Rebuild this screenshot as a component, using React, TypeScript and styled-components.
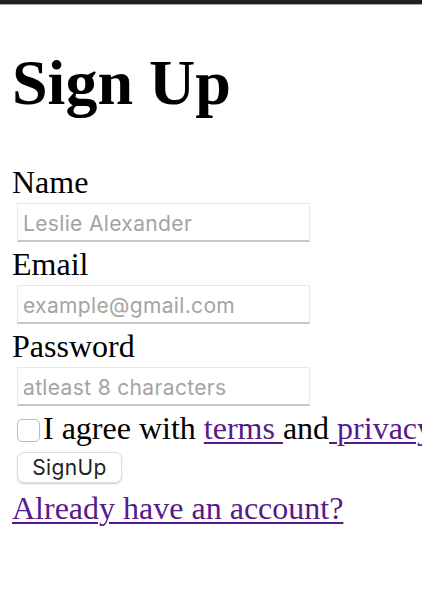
import React from "react";
import styled, { createGlobalStyle } from "styled-components";

const Global = createGlobalStyle`
  html, body {
    margin: 0;
    padding: 0;
    background: #ffffff;
    overflow: hidden;
  }
  body {
    font-family: "Liberation Serif", "Times New Roman", serif;
    color: #000;
  }
`;

const TopBar = styled.div`
  height: 4px;
  background: #202020;
  border-bottom: 1px solid #a8a8a8;
`;

const Page = styled.main`
  padding-left: 12px;
  white-space: nowrap;
`;

const Title = styled.h1`
  font-family: "Liberation Serif", "Times New Roman", serif;
  font-size: 64px;
  font-weight: 700;
  line-height: 71px;
  margin: 42px 0 46px;
`;

const Form = styled.form`
  display: flex;
  flex-direction: column;
  align-items: flex-start;
`;

const Label = styled.label`
  font-size: 32px;
  line-height: 36px;
  height: 36px;
  margin-bottom: 3px;
`;

const Input = styled.input`
  box-sizing: border-box;
  width: 293px;
  height: 39px;
  margin: 0 0 4px 5px;
  padding: 3px 5px 0;
  border: 1px solid #e8e8e8;
  border-bottom: 2px solid #c6c6c6;
  border-radius: 0;
  background: #fff;
  font-family: Inter, "Liberation Sans", sans-serif;
  font-size: 21px;
  letter-spacing: 0.35px;
  color: #222;
  outline: none;
  &::placeholder {
    color: #a4a4a4;
  }
`;

const AgreeRow = styled.div`
  display: flex;
  align-items: flex-start;
  font-size: 32px;
  line-height: 36px;
  height: 36px;
`;

const Check = styled.span`
  box-sizing: border-box;
  width: 23px;
  height: 23px;
  margin: 9px 3px 0 5px;
  border: 1px solid #b9b9b9;
  border-radius: 5px;
  background: #fff;
  flex-shrink: 0;
`;

const TextLink = styled.a`
  color: #551a8b;
  text-decoration: underline;
  text-decoration-thickness: 2px;
  text-underline-offset: 3px;
  white-space: pre;
`;

const Plain = styled.span`
  white-space: pre;
`;

const Button = styled.button`
  box-sizing: border-box;
  width: 105px;
  height: 31px;
  margin: 6px 0 0 5px;
  padding: 0;
  border: 1px solid #dedede;
  border-radius: 7px;
  background: #fff;
  box-shadow: 0 1px 1.5px rgba(0, 0, 0, 0.18);
  font-family: Inter, "Liberation Sans", sans-serif;
  font-size: 21px;
  letter-spacing: 0.35px;
  color: #222;
`;

const BottomLink = styled(TextLink)`
  display: block;
  font-size: 32px;
  line-height: 36px;
  margin-top: 7px;
`;

export default function App() {
  return (
    <>
      <Global />
      <TopBar />
      <Page>
        <Title>Sign Up</Title>
        <Form onSubmit={(e) => e.preventDefault()}>
          <Label htmlFor="name">Name</Label>
          <Input id="name" placeholder="Leslie Alexander" />
          <Label htmlFor="email">Email</Label>
          <Input id="email" placeholder="example@gmail.com" />
          <Label htmlFor="password">Password</Label>
          <Input id="password" type="password" placeholder="atleast 8 characters" />
          <AgreeRow>
            <Check role="checkbox" aria-checked="false" />
            <Plain>I agree with </Plain>
            <TextLink href="#">terms </TextLink>
            <Plain>and</Plain>
            <TextLink href="#"> privacy policy</TextLink>
          </AgreeRow>
          <Button type="submit">SignUp</Button>
        </Form>
        <BottomLink href="#">Already have an account?</BottomLink>
      </Page>
    </>
  );
}
